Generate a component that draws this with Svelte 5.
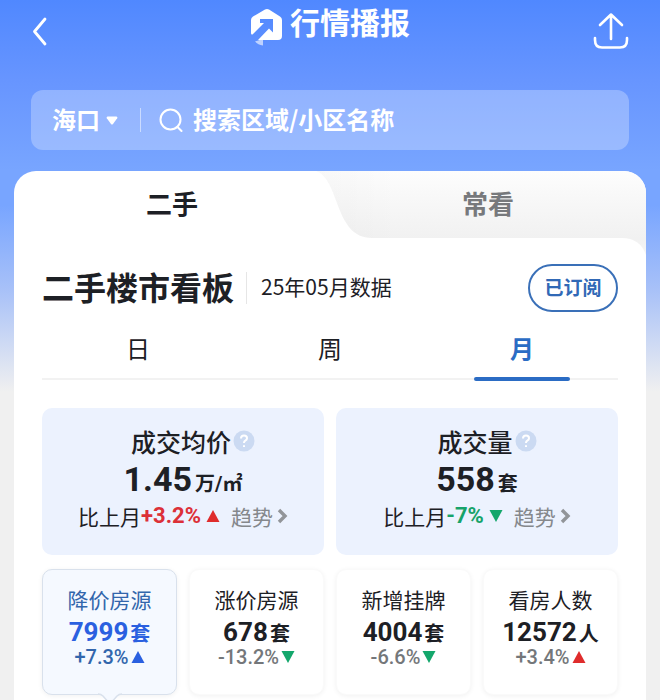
<script lang="ts">
  type Trend = 'up' | 'down'

  type Summary = { label: string; value: string; unit: string; change: string; trend: Trend }

  type Stat = Summary & { id: string }

  const SUMMARY: Summary[] = [
    { label: '成交均价', value: '1.45', unit: '万/㎡', change: '+3.2%', trend: 'up' },
    { label: '成交量', value: '558', unit: '套', change: '-7%', trend: 'down' },
  ]

  const STATS: Stat[] = [
    { id: 'cut', label: '降价房源', value: '7999', unit: '套', change: '+7.3%', trend: 'up' },
    { id: 'raise', label: '涨价房源', value: '678', unit: '套', change: '-13.2%', trend: 'down' },
    { id: 'new', label: '新增挂牌', value: '4004', unit: '套', change: '-6.6%', trend: 'down' },
    { id: 'visit', label: '看房人数', value: '12572', unit: '人', change: '+3.4%', trend: 'up' },
  ]

  const PERIODS = ['日', '周', '月']

  let city = $state('海口')
  let keyword = $state('')
  let period = $state('月')
  let stat = $state('cut')
</script>

{#snippet triangle(trend: Trend)}
  <svg class="triangle {trend}" width="14" height="12" viewBox="0 0 14 12" aria-hidden="true">
    <path d={trend === 'up' ? 'M7 0 13.5 12H.5z' : 'M.5 0h13L7 12z'} />
  </svg>
{/snippet}

<div class="page">
  <header>
    <button class="icon" aria-label="返回">
      <svg width="20" height="32" viewBox="0 0 20 32"><path d="M15 4 4.500 16.500 15 29" fill="none" stroke="#fff" stroke-width="2.800" stroke-linecap="round" stroke-linejoin="round" /></svg>
    </button>
    <h1>
      <svg width="34" height="38" viewBox="0 0 34 38" aria-hidden="true">
        <path d="M15 1.500q2-1 4 0l11 7q2 1.200 2 3.500v16q0 4-4 4H8L19 20.500l4 4V11H10v4h4L2.500 26.500Q1 27 1 25V12q0-2.300 2-3.500z" fill="#fff" />
        <path d="M5 33.500Q9 33 13 30v7.500q-5-.5-8-4" fill="#fff" opacity=".6" />
      </svg>
      <span>行情播报</span>
    </h1>
    <button class="icon" aria-label="分享">
      <svg width="38" height="38" viewBox="0 0 38 38"><path d="M19 27V3M8 13 19 2.500 30 13M3 26v2q0 7.500 7 7.500h18q7 0 7-7.500v-2" fill="none" stroke="#fff" stroke-width="2.600" stroke-linecap="round" stroke-linejoin="round" /></svg>
    </button>
  </header>

  <div class="search">
    <label class="city">
      <select bind:value={city} aria-label="城市">
        <option>海口</option>
      </select>
      <svg width="12" height="9" viewBox="0 0 12 9" aria-hidden="true"><path d="M1.500.5h9q1.500.5.7 1.800L7 8q-1 1-2 0L.8 2.300Q0 1 1.500.5" fill="#fff" /></svg>
    </label>
    <svg class="glass" width="24" height="24" viewBox="0 0 24 24" aria-hidden="true">
      <circle cx="11.500" cy="11.500" r="10" /><path d="m18.500 19 4 4" />
    </svg>
    <input type="search" bind:value={keyword} placeholder="搜索区域/小区名称" aria-label="搜索" />
  </div>

  <main>
    <nav>
      <button class="current">二手</button>
      <button class="other">
        <svg viewBox="0 0 330 86" preserveAspectRatio="none" aria-hidden="true">
          <defs>
            <linearGradient id="shade" x1="0" y1="0" x2="0" y2="1">
              <stop offset="0" stop-color="#fdfdfd" />
              <stop offset=".8" stop-color="#f1f1f1" />
              <stop offset="1" stop-color="#f5f5f5" />
            </linearGradient>
            <linearGradient id="edge" x1="0" y1="0" x2="1" y2="0">
              <stop offset="0" stop-color="#000" stop-opacity=".02" />
              <stop offset=".25" stop-color="#000" stop-opacity="0" />
            </linearGradient>
          </defs>
          <path d="M0 0C24 8 18 67 56 67H306Q324 67 330 84V0z" fill="url(#shade)" />
          <path d="M0 0C24 8 18 67 56 67H306Q324 67 330 84V0z" fill="url(#edge)" />
        </svg>
        <span>常看</span>
      </button>
    </nav>

    <section>
      <div class="heading">
        <h2>二手楼市看板</h2>
        <p>25年05月数据</p>
        <button class="subscribe">已订阅</button>
      </div>

      <div class="periods">
        {#each PERIODS as p}
          <button class:active={period === p} onclick={() => (period = p)}>{p}</button>
        {/each}
      </div>

      <div class="summary">
        {#each SUMMARY as s}
          <article>
            <h3>
              {s.label}
              <svg width="22" height="22" viewBox="0 0 22 22" aria-hidden="true">
                <circle cx="11" cy="11" r="10.500" fill="#cbdaf2" />
                <path d="M8 8.500q0-3 3-3t3 2.700q0 1.500-1.700 2.500-1.300.8-1.300 2.300M11 15.300v1.700" fill="none" stroke="#fff" stroke-width="2" />
              </svg>
            </h3>
            <div class="value">{s.value}<small>{s.unit}</small></div>
            <div class="compare">
              <span>比上月</span><b class={s.trend}>{s.change}</b>
              {@render triangle(s.trend)}
              <a href="#trend">趋势<svg width="11" height="16" viewBox="0 0 11 16" aria-hidden="true"><path d="m2 2 6 6-6 6" fill="none" stroke="#929599" stroke-width="3.400" /></svg></a>
            </div>
          </article>
        {/each}
      </div>

      <div class="stats">
        {#each STATS as s (s.id)}
          <button class:picked={stat === s.id} onclick={() => (stat = s.id)}>
            <span class="name">{s.label}</span>
            <span class="count">{s.value}<small>{s.unit}</small></span>
            <span class="change">{s.change}{@render triangle(s.trend)}</span>
            {#if stat === s.id}
              <svg class="pointer" width="24" height="12" viewBox="0 0 24 12" aria-hidden="true"><path d="M0 0h24L12 11z" fill="#f5f9ff" /><path d="M0 1q3 0 5 2l7 8 7-8q2-2 5-2" fill="none" stroke="#d9e1ec" stroke-width="1.500" /></svg>
            {/if}
          </button>
        {/each}
      </div>
    </section>
  </main>
</div>

<style>
  :global(body) { margin: 0; }
  .page {
    box-sizing: border-box;
    min-height: 100vh;
    padding: 0 14px;
    overflow: hidden;
    background: linear-gradient(#5088ff 0, #6795ff 80px, #78a5ff 170px, #78a5ff 205px, #a8c1f8 290px, #f0f0f0 392px);
    color: #1d2025;
    font-family: 'Noto Sans CJK SC', sans-serif;
  }
  button, input, select { font: inherit; color: inherit; background: none; border: 0; padding: 0; margin: 0; outline: none; }
  button { cursor: pointer; }
  svg { display: block; flex: none; }
  h1, h2, h3, p { margin: 0; }

  header { display: flex; justify-content: space-between; align-items: center; height: 62px; padding: 0 16px; }
  .icon { display: flex; width: 38px; }
  h1 { display: flex; align-items: flex-start; gap: 6px; align-self: flex-start; color: #fff; font-size: 30px; line-height: 42px; }
  h1 svg { margin-top: 8px; }

  .search {
    display: flex; align-items: center; height: 60px; box-sizing: border-box;
    margin: 28px 17px 21px; padding: 0 21px;
    border-radius: 12px; background: rgba(255, 255, 255, .27); color: #fff; font-size: 24px;
  }
  .city { display: flex; align-items: center; gap: 6px; padding-right: 22px; border-right: 1px solid rgba(255, 255, 255, .5); height: 24px; }
  .city select { appearance: none; font-weight: 700; padding-bottom: 4px; }
  .city option { color: #1d2025; }
  .glass { margin: 0 10px 0 18px; fill: none; stroke: #fff; stroke-width: 2; stroke-linecap: round; }
  .search input { flex: 1; min-width: 0; appearance: none; font-weight: 700; padding-bottom: 4px; }
  .search input::placeholder { color: #fff; opacity: 1; }

  main { background: #fff; border-radius: 22px 22px 0 0; overflow: hidden; min-height: calc(100vh - 171px); }
  nav { display: flex; height: 67px; font-size: 26px; font-weight: 700; }
  nav button { flex: 1; position: relative; padding-bottom: 4px; }
  .other { color: #77797c; }
  .other svg { position: absolute; top: 0; right: 0; width: calc(100% + 14px); height: 86px; }
  .other span { position: relative; }

  section { position: relative; padding: 22px 28px 6px; }
  .heading { display: flex; align-items: center; height: 56px; }
  h2 { font-size: 32px; line-height: 40px; padding-bottom: 4px; }
  .heading p { margin-left: 12px; padding-left: 14px; border-left: 1px solid #e6e6e6; font-size: 21px; line-height: 28px; padding-bottom: 4px; }
  .subscribe { margin-left: auto; width: 90px; height: 48px; box-sizing: border-box; padding-bottom: 4px; border: 2px solid #3a70b8; border-radius: 24px; color: #3169b6; font-size: 19px; font-weight: 700; }

  .periods { display: flex; border-bottom: 2px solid #f2f2f2; font-size: 24px; }
  .periods button { flex: 1; position: relative; height: 62px; }
  .periods .active { color: #2b6cc4; font-weight: 700; }
  .periods .active::after { content: ''; position: absolute; left: 25%; right: 25%; bottom: -3px; height: 4px; border-radius: 2px; background: #2b6cc4; }

  .summary { display: grid; grid-template-columns: 1fr 1fr; gap: 12px; margin-top: 28px; }
  article { height: 147px; box-sizing: border-box; padding-top: 15px; border-radius: 10px; background: #ecf2fe; }
  h3 { display: flex; justify-content: center; align-items: center; gap: 2px; padding-left: 20px; font-size: 25px; line-height: 36px; font-weight: 500; }
  .value { display: flex; justify-content: center; align-items: baseline; gap: 3px; font: 700 34px/40px Roboto, 'Noto Sans CJK SC', sans-serif; }
  .value small { font-size: 20px; line-height: 24px; }
  .compare { display: flex; justify-content: center; align-items: center; font-size: 21px; line-height: 34px; }
  .compare b { font-family: Roboto, sans-serif; font-size: 22px; margin-right: 5px; }
  .compare a { display: flex; align-items: center; gap: 4px; margin-left: 11px; color: #85888c; text-decoration: none; }
  b.up { color: #dc3038; }
  b.down { color: #17a36a; }
  .triangle.up { fill: #df2c2c; }
  .triangle.down { fill: #14a76c; }

  .stats { display: grid; grid-template-columns: repeat(4, 1fr); gap: 12px; margin-top: 14px; }
  .stats button {
    position: relative; display: flex; flex-direction: column; align-items: center;
    height: 126px; box-sizing: border-box; padding-top: 12px;
    border: 1px solid #fafafa; border-radius: 10px; background: #fff; box-shadow: 0 1px 5px rgba(0, 0, 0, .06);
  }
  .name { font-size: 21px; line-height: 34px; }
  .count { display: flex; align-items: baseline; gap: 2px; font: 700 26px/32px Roboto, 'Noto Sans CJK SC', sans-serif; }
  .count small { font-size: 20px; line-height: 24px; }
  .change { display: flex; align-items: center; gap: 2px; font: 500 20px/18px Roboto, sans-serif; color: #74777a; }
  .stats .picked { background: #f5f9ff; border-color: #d9e1ec; color: #2a60e0; }
  .picked .name, .picked .change { color: #3266ac; }
  .picked .triangle { fill: #2a60e0; }
  .pointer { position: absolute; left: calc(50% - 12px); top: 123px; }
</style>
